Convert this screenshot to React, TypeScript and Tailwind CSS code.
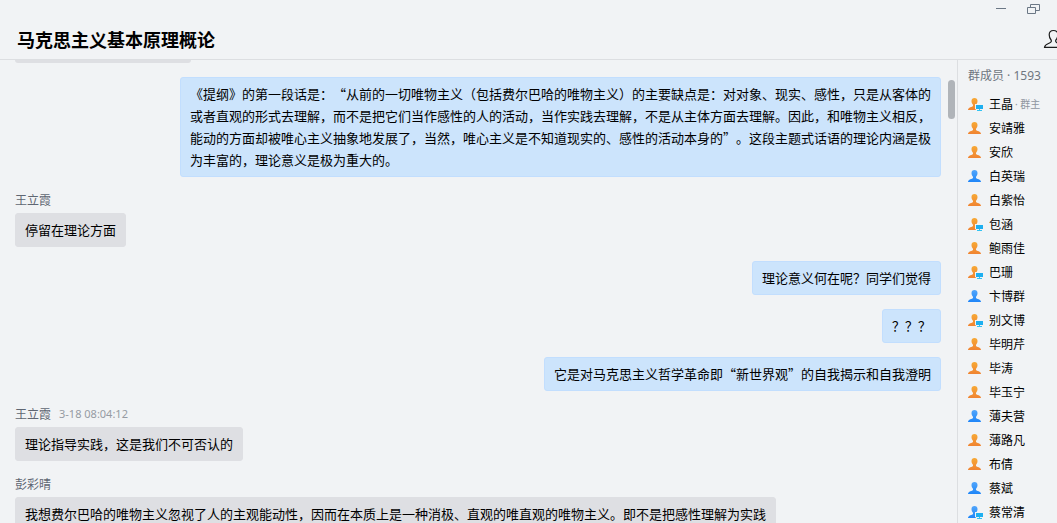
import React from 'react';

type Status = 'orange' | 'blue';

interface Member {
  name: string;
  color: Status;
  pc?: boolean;
  owner?: boolean;
}

interface Message {
  id: number;
  author?: string;
  time?: string;
  mine?: boolean;
  text: string;
}

const MEMBERS: Member[] = [
  { name: '王晶', color: 'orange', pc: true, owner: true },
  { name: '安靖雅', color: 'orange' },
  { name: '安欣', color: 'orange' },
  { name: '白英瑞', color: 'blue' },
  { name: '白紫怡', color: 'orange' },
  { name: '包涵', color: 'orange', pc: true },
  { name: '鲍雨佳', color: 'orange' },
  { name: '巴珊', color: 'orange', pc: true },
  { name: '卞博群', color: 'blue' },
  { name: '别文博', color: 'orange', pc: true },
  { name: '毕明芹', color: 'orange' },
  { name: '毕涛', color: 'orange' },
  { name: '毕玉宁', color: 'orange' },
  { name: '薄夫营', color: 'blue' },
  { name: '薄路凡', color: 'orange' },
  { name: '布倩', color: 'orange' },
  { name: '蔡斌', color: 'blue' },
  { name: '蔡常清', color: 'blue', pc: true },
];

const MESSAGES: Message[] = [
  {
    id: 1,
    mine: true,
    text: '《提纲》的第一段话是：“从前的一切唯物主义（包括费尔巴哈的唯物主义）的主要缺点是：对对象、现实、感性，只是从客体的或者直观的形式去理解，而不是把它们当作感性的人的活动，当作实践去理解，不是从主体方面去理解。因此，和唯物主义相反，能动的方面却被唯心主义抽象地发展了，当然，唯心主义是不知道现实的、感性的活动本身的”。这段主题式话语的理论内涵是极为丰富的，理论意义是极为重大的。',
  },
  { id: 2, author: '王立霞', text: '停留在理论方面' },
  { id: 3, mine: true, text: '理论意义何在呢？同学们觉得' },
  { id: 4, mine: true, text: '？？？' },
  { id: 5, mine: true, text: '它是对马克思主义哲学革命即“新世界观”的自我揭示和自我澄明' },
  { id: 6, author: '王立霞', time: '3-18 08:04:12', text: '理论指导实践，这是我们不可否认的' },
  {
    id: 7,
    author: '彭彩晴',
    text: '我想费尔巴哈的唯物主义忽视了人的主观能动性，因而在本质上是一种消极、直观的唯直观的唯物主义。即不是把感性理解为实践',
  },
];

const PersonIcon: React.FC<{ color: Status; pc?: boolean }> = ({ color, pc }) => {
  const body =
    'M6.5 1C4.6 1 3.5 2.2 3.5 4.1C3.5 5.7 4.1 6.9 5 7.8V9.1C4.5 9.9 2.4 10.1 1.1 10.9C.3 11.4 0 12.1 0 13H13C13 12.1 12.7 11.4 11.9 10.9C10.6 10.1 8.5 9.9 8 9.1V7.8C8.9 6.9 9.5 5.7 9.5 4.1C9.5 2.2 8.4 1 6.5 1Z';
  return (
    <svg width="17" height="14" viewBox="0 0 17 14" className="shrink-0" aria-hidden="true">
      <defs>
        <linearGradient id="orange" x1="0" y1="0" x2="0" y2="1">
          <stop offset="0" stopColor="#f7a935" />
          <stop offset="1" stopColor="#f08432" />
        </linearGradient>
        <linearGradient id="blue" x1="0" y1="0" x2="0" y2="1">
          <stop offset="0" stopColor="#51a5fb" />
          <stop offset="1" stopColor="#1f86f8" />
        </linearGradient>
      </defs>
      <path d={body} fill={color === 'orange' ? 'url(#orange)' : 'url(#blue)'} />
      {pc && (
        <>
          <path d="M7 7H16V14H9L7 11.5Z" fill="#f1f3f5" />
          <path d="M8 8H15V12H8Z" fill="#1eaff0" />
          <path d="M11 12H12V13H14V14H9V13H11Z" fill="#33c3f3" />
        </>
      )}
    </svg>
  );
};

const Bubble: React.FC<{ message: Message }> = ({ message }) => {
  const { author, time, mine, text } = message;
  return (
    <li className={`flex flex-col ${mine ? 'items-end' : 'items-start'}`}>
      {author && (
        <div className="mb-1 flex items-center gap-2 text-[12px] leading-[18px] text-[#5f6672]">
          <span>{author}</span>
          {time && <time className="font-['Noto_Sans'] text-[11px] text-[#969ba3]">{time}</time>}
        </div>
      )}
      <p
        className={`max-w-[761px] rounded-[3px] border px-[9px] py-[5px] text-[13px] leading-[22px] ${
          mine ? 'border-[#c2defe] bg-[#cce4fc]' : 'border-[#dedfe3] bg-[#dedfe3]'
        }`}
      >
        {text}
      </p>
    </li>
  );
};

export default function App() {
  return (
    <div
      lang="zh-CN"
      className="flex h-screen flex-col overflow-hidden bg-[#f1f3f5] font-['Noto_Sans_CJK_SC',sans-serif] text-black [text-spacing-trim:space-all]"
    >
      <header className="shrink-0 border-b border-[#dcdee1]">
        <div className="flex h-[18px] items-center justify-end gap-5 pr-[17px] text-[#6b7785]">
          <button type="button" aria-label="最小化">
            <svg width="12" height="12" viewBox="0 0 12 12" className="block" fill="none" stroke="currentColor">
              <path d="M1 5.5H11" />
            </svg>
          </button>
          <button type="button" aria-label="还原">
            <svg width="13" height="12" viewBox="0 0 13 12" className="block" fill="none" stroke="currentColor">
              <path d="M.5 4.5H8.5V10.5H.5ZM3.5 4V1.5H12.5V7.5H9" />
            </svg>
          </button>
        </div>
        <div className="flex h-[41px] items-center justify-between pl-[17px]">
          <h1 className="text-[18px] leading-6 font-bold">马克思主义基本原理概论</h1>
          <button type="button" aria-label="群成员" className="-mr-2">
            <svg width="22" height="20" viewBox="0 0 22 20" className="block" fill="none" stroke="#1c1c1c" strokeWidth="1.2">
              <path d="M10.5 1.5C7.6 1.5 6.2 3.2 6.2 5.7C6.2 8 7 9.7 8.1 11C8.7 12.3 8.1 13.3 6.5 14C4.3 15 1.6 15.6 1.5 18.4H19.5C19.4 15.6 16.7 15 14.5 14C12.9 13.3 12.3 12.3 12.9 11C14 9.7 14.8 8 14.8 5.7C14.8 3.2 13.4 1.5 10.5 1.5Z" />
            </svg>
          </button>
        </div>
      </header>

      <div className="flex min-h-0 flex-1">
        <main className="min-w-0 flex-1 overflow-hidden pl-[15px]">
          {/* tail of the message scrolled under the header */}
          <div className="h-[3px] w-44 rounded-b-[3px] bg-[#dedfe3]" />
          <ul className="mt-[14px] flex flex-col gap-[14px] pr-[7px]">
            {MESSAGES.map((message) => (
              <Bubble key={message.id} message={message} />
            ))}
          </ul>
        </main>

        <div className="w-[9px] shrink-0 pt-5">
          <div className="h-[39px] w-[7px] rounded-full bg-[#b0b4b9]" />
        </div>

        <aside className="w-[100px] shrink-0 overflow-hidden border-l border-[#dcdee1] pl-[10px]">
          <h2 className="h-8 font-['Noto_Sans','Noto_Sans_CJK_SC',sans-serif] text-[12px] leading-8 whitespace-nowrap text-[#6f7680]">
            群成员 · 1593
          </h2>
          <ul>
            {MEMBERS.map((member) => (
              <li key={member.name} className="flex h-6 items-center text-[12px] whitespace-nowrap">
                <PersonIcon color={member.color} pc={member.pc} />
                <span className="ml-1">{member.name}</span>
                {member.owner && (
                  <span className="ml-0.5 font-['Noto_Sans','Noto_Sans_CJK_SC',sans-serif] text-[10px] text-[#8f96a0]">
                    · 群主
                  </span>
                )}
              </li>
            ))}
          </ul>
        </aside>
      </div>
    </div>
  );
}
